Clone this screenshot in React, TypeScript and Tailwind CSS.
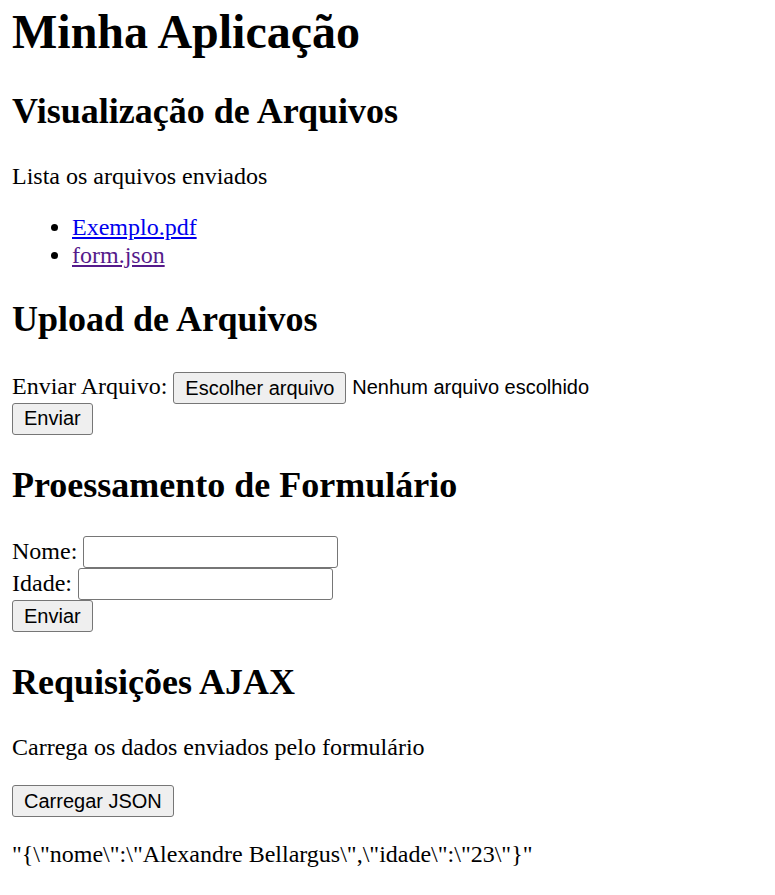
import React from "react";

const serif = { fontFamily: '"Liberation Serif", "Times New Roman", serif' };

function Btn({ children }: { children: React.ReactNode }) {
  return (
    <button
      type="button"
      className="h-[32px] px-[11px] bg-[#efefef] border border-[#767676] rounded-[3px] text-[20px] leading-[23px] text-black font-['Liberation_Sans',Arial,sans-serif]"
    >
      {children}
    </button>
  );
}

function TextInput({ w }: { w: string }) {
  return (
    <input
      type="text"
      className={`h-[32px] ${w} bg-white border border-[#767676] rounded-[3px] px-[3px] text-[20px] font-['Liberation_Sans',Arial,sans-serif]`}
    />
  );
}

export default function App() {
  return (
    <div className="min-h-[895px] bg-white text-black px-[12px] pt-[4px] text-[24px]" style={serif}>
      <h1 className="text-[48px] font-bold leading-[55.2px] mb-[32px]">Minha Aplicação</h1>

      <h2 className="text-[36px] font-bold leading-[41.4px] my-[30px]">Visualização de Arquivos</h2>
      <p className="leading-[27.6px] my-[24px]">Lista os arquivos enviados</p>
      <ul className="list-disc pl-[60px] my-[24px] leading-[27.6px]">
        <li>
          <a href="#" className="text-[#0000ee] underline">Exemplo.pdf</a>
        </li>
        <li>
          <a href="#" className="text-[#551a8b] underline">form.json</a>
        </li>
      </ul>

      <h2 className="text-[36px] font-bold leading-[41.4px] my-[30px]">Upload de Arquivos</h2>
      <div>
        <div className="flex items-center h-[32px]">
          <span className="leading-[27.6px]">Enviar Arquivo:</span>
          <span className="ml-[6px]">
            <Btn>Escolher arquivo</Btn>
          </span>
          <span className="ml-[6px] text-[20px] font-['Liberation_Sans',Arial,sans-serif]">Nenhum arquivo escolhido</span>
        </div>
        <div className="flex items-center h-[32px]">
          <Btn>Enviar</Btn>
        </div>
      </div>

      <h2 className="text-[36px] font-bold leading-[41.4px] my-[30px]">Proessamento de Formulário</h2>
      <div>
        <div className="flex items-center h-[32px]">
          <span className="leading-[27.6px] mr-[6px]">Nome:</span>
          <TextInput w="w-[255px]" />
        </div>
        <div className="flex items-center h-[32px]">
          <span className="leading-[27.6px] mr-[6px]">Idade:</span>
          <TextInput w="w-[255px]" />
        </div>
        <div className="flex items-center h-[32px]">
          <Btn>Enviar</Btn>
        </div>
      </div>

      <h2 className="text-[36px] font-bold leading-[41.4px] my-[30px]">Requisições AJAX</h2>
      <p className="leading-[27.6px] my-[24px]">Carrega os dados enviados pelo formulário</p>
      <div className="flex items-center h-[32px]">
        <Btn>Carregar JSON</Btn>
      </div>
      <p className="leading-[27.6px] my-[24px]">
        {'"{\\"nome\\":\\"Alexandre Bellargus\\",\\"idade\\":\\"23\\"}"'}
      </p>
    </div>
  );
}
